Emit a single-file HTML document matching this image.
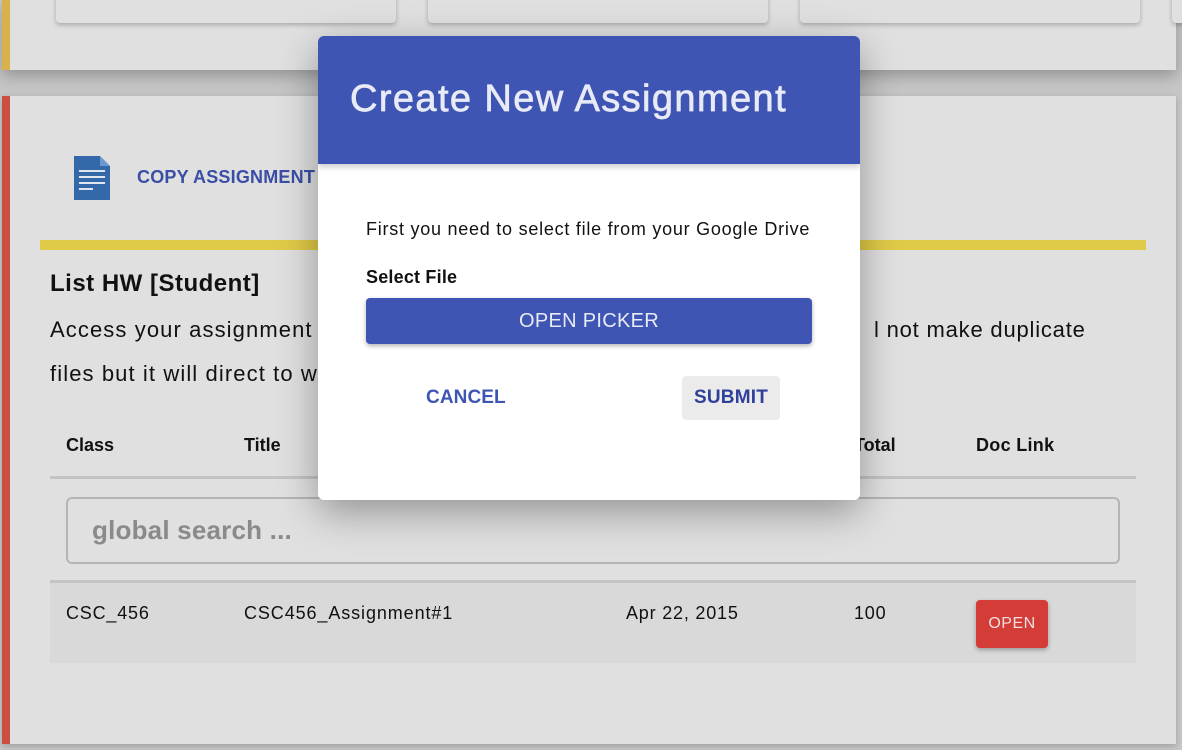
<!DOCTYPE html>
<html><head><style>
body{margin:0;width:1182px;height:750px;background:#c6c6c6;font-family:"Liberation Sans",sans-serif;position:relative;overflow:hidden;color:#111}
.a{position:absolute;white-space:nowrap}
.card{background:#e0e0e0}
</style></head><body>
<div class="a card" style="left:2px;top:0;width:1174px;height:70px;box-shadow:0 6px 14px rgba(0,0,0,.25)"></div>
<div class="a" style="left:2px;top:0;width:8px;height:70px;background:#d8b04c"></div>
<div class="a card" style="left:56px;top:-10px;width:340px;height:33px;border-radius:4px;box-shadow:0 2px 5px rgba(0,0,0,.25)"></div>
<div class="a card" style="left:428px;top:-10px;width:340px;height:33px;border-radius:4px;box-shadow:0 2px 5px rgba(0,0,0,.25)"></div>
<div class="a card" style="left:800px;top:-10px;width:340px;height:33px;border-radius:4px;box-shadow:0 2px 5px rgba(0,0,0,.25)"></div>
<div class="a card" style="left:1172px;top:-10px;width:40px;height:33px;border-radius:4px;box-shadow:0 2px 5px rgba(0,0,0,.25)"></div>

<div class="a card" style="left:2px;top:96px;width:1174px;height:648px;box-shadow:0 2px 6px rgba(0,0,0,.2)"></div>
<div class="a" style="left:2px;top:96px;width:8px;height:648px;background:#c95040"></div>
<svg class="a" style="left:74px;top:156px" width="36" height="44" viewBox="0 0 36 44"><path d="M0 0H26L36 10V44H0Z" fill="#3568a8"/><path d="M26 0L36 10H26Z" fill="#6a9ad0"/><g fill="#dfe6f0"><rect x="5" y="14" width="26" height="2"/><rect x="5" y="20" width="26" height="2"/><rect x="5" y="26" width="26" height="2"/><rect x="5" y="32" width="14" height="2"/></g></svg>
<div class="a" style="left:137px;top:167px;font-size:18px;color:#3a4ea6;font-weight:bold;letter-spacing:0.2px">COPY ASSIGNMENT</div>
<div class="a" style="left:40px;top:240px;width:1106px;height:10px;background:#e0cb48"></div>
<div class="a" style="left:50px;top:270px;font-size:24px;font-weight:bold;letter-spacing:0.5px">List HW [Student]</div>
<div class="a" style="left:50px;top:317px;font-size:22px;letter-spacing:1.1px">Access your assignment</div>
<div class="a" style="left:874px;top:317px;font-size:22px;letter-spacing:0.8px">l not make duplicate</div>
<div class="a" style="left:50px;top:361px;font-size:22px;letter-spacing:1.1px">files but it will direct to w</div>
<div class="a" style="left:66px;top:435px;font-size:18px;font-weight:bold">Class</div>
<div class="a" style="left:244px;top:435px;font-size:18px;font-weight:bold">Title</div>
<div class="a" style="left:854px;top:435px;font-size:18px;font-weight:bold">Total</div>
<div class="a" style="left:976px;top:435px;font-size:18px;font-weight:bold;letter-spacing:0.3px">Doc Link</div>
<div class="a" style="left:50px;top:476px;width:1086px;height:3px;background:#c4c4c4"></div>
<div class="a" style="left:66px;top:497px;width:1050px;height:63px;border:2px solid #b5b5b5;border-radius:6px"></div>
<div class="a" style="left:92px;top:515px;font-size:26px;font-weight:bold;color:#8a8a8a;letter-spacing:0.2px">global search ...</div>
<div class="a" style="left:50px;top:580px;width:1086px;height:3px;background:#c4c4c4"></div>
<div class="a" style="left:50px;top:583px;width:1086px;height:80px;background:#d9d9d9"></div>
<div class="a" style="left:66px;top:603px;font-size:18px;letter-spacing:0.8px">CSC_456</div>
<div class="a" style="left:244px;top:603px;font-size:18px;letter-spacing:0.9px">CSC456_Assignment#1</div>
<div class="a" style="left:626px;top:603px;font-size:18px;letter-spacing:0.8px">Apr 22, 2015</div>
<div class="a" style="left:854px;top:603px;font-size:18px;letter-spacing:0.8px">100</div>
<div class="a" style="left:976px;top:600px;width:72px;height:48px;background:#d43d37;border-radius:4px;color:#f2e0e0;font-size:16px;text-align:center;line-height:48px;box-shadow:0 2px 5px rgba(0,0,0,.3);letter-spacing:0.5px">OPEN</div>

<div class="a" style="left:318px;top:36px;width:542px;height:464px;background:#fff;border-radius:6px;box-shadow:0 12px 40px rgba(0,0,0,.35);overflow:hidden">
 <div style="height:128px;background:#3f55b3;box-shadow:0 3px 6px rgba(0,0,0,.2);position:relative"><div class="a" style="left:32px;top:42px;font-size:38px;color:#e8eaf6;letter-spacing:1.4px;-webkit-text-stroke:0.7px #e8eaf6">Create New Assignment</div></div>
 <div class="a" style="left:48px;top:183px;font-size:18px;letter-spacing:0.75px">First you need to select file from your Google Drive</div>
 <div class="a" style="left:48px;top:231px;font-size:18px;font-weight:bold;letter-spacing:0.2px">Select File</div>
 <div class="a" style="left:48px;top:262px;width:446px;height:46px;background:#3f55b3;border-radius:4px;color:#e8eaf6;font-size:20px;text-align:center;line-height:46px;box-shadow:0 2px 5px rgba(0,0,0,.3);letter-spacing:0.3px">OPEN PICKER</div>
 <div class="a" style="left:108px;top:351px;font-size:19px;color:#3f55b3;font-weight:bold;letter-spacing:0.1px">CANCEL</div>
 <div class="a" style="left:364px;top:340px;width:98px;height:44px;background:#ebebeb;border-radius:4px;font-size:19px;color:#2f3f9a;text-align:center;line-height:44px;font-weight:bold;letter-spacing:0.2px">SUBMIT</div>
</div>
</body></html>
